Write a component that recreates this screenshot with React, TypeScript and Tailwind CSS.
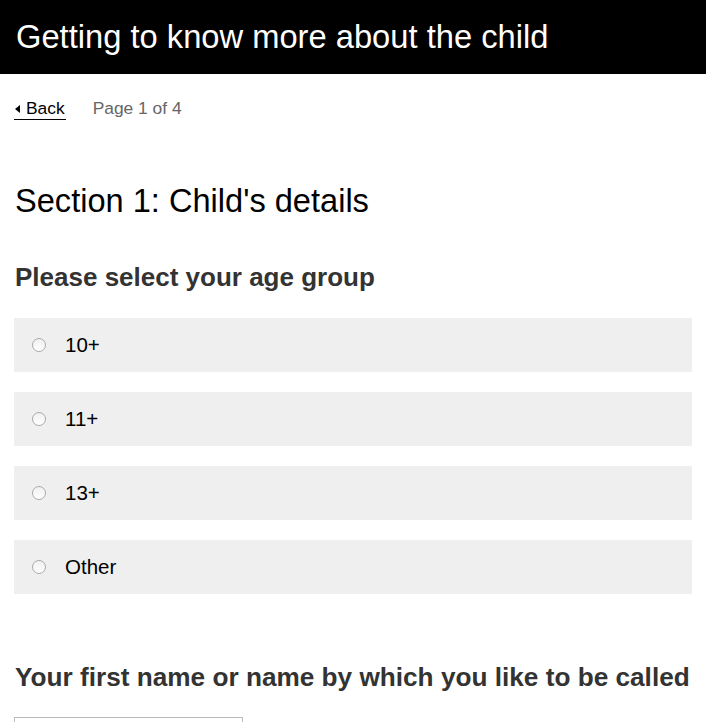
import React from "react";

const options = ["10+", "11+", "13+", "Other"];

export default function App() {
  return (
    <div className="min-h-screen bg-white text-black" style={{ fontFamily: '"Liberation Sans", Arial, sans-serif' }}>
      <header className="bg-black h-[74px] flex items-center px-4">
        <h1 className="text-white text-[32.7px] leading-none">Getting to know more about the child</h1>
      </header>
      <div className="px-[14px]">
        <div className="flex items-center gap-[27px] pt-[26px]">
          <a href="#" className="flex items-center gap-[6px] text-[17.4px] leading-none text-black border-b border-black pb-[2px] pl-[1px] pr-[1px]">
            <svg width="5" height="8" viewBox="0 0 5 8"><polygon points="5,0 5,8 0,4" fill="black" /></svg>
            <span>Back</span>
          </a>
          <span className="text-[17.4px] leading-none text-[#666] pb-[3px]">Page 1 of 4</span>
        </div>
        <h2 className="text-[32.6px] leading-none mt-[65px] pl-[1px]">Section 1: Child's details</h2>
        <h3 className="text-[26px] font-bold text-[#333] leading-none mt-[46px] pl-[1px]">Please select your age group</h3>
        <div className="flex flex-col gap-[20px] mt-[28px]">
          {options.map((o) => (
            <label key={o} className="h-[54px] bg-[#efefef] flex items-center pl-[18px] gap-[19px]">
              <span className="w-[14px] h-[14px] rounded-full border border-[#aaaaaa] bg-gradient-to-b from-[#f0f0f0] to-white inline-block" />
              <span className="text-[20.5px] leading-none">{o}</span>
            </label>
          ))}
        </div>
        <h3 className="text-[26.2px] font-bold text-[#333] leading-none mt-[70px] pl-[1px]">Your first name or name by which you like to be called</h3>
        <div className="mt-[27px] w-[229px] h-[40px] border border-[#bbb] bg-white" />
      </div>
    </div>
  );
}
